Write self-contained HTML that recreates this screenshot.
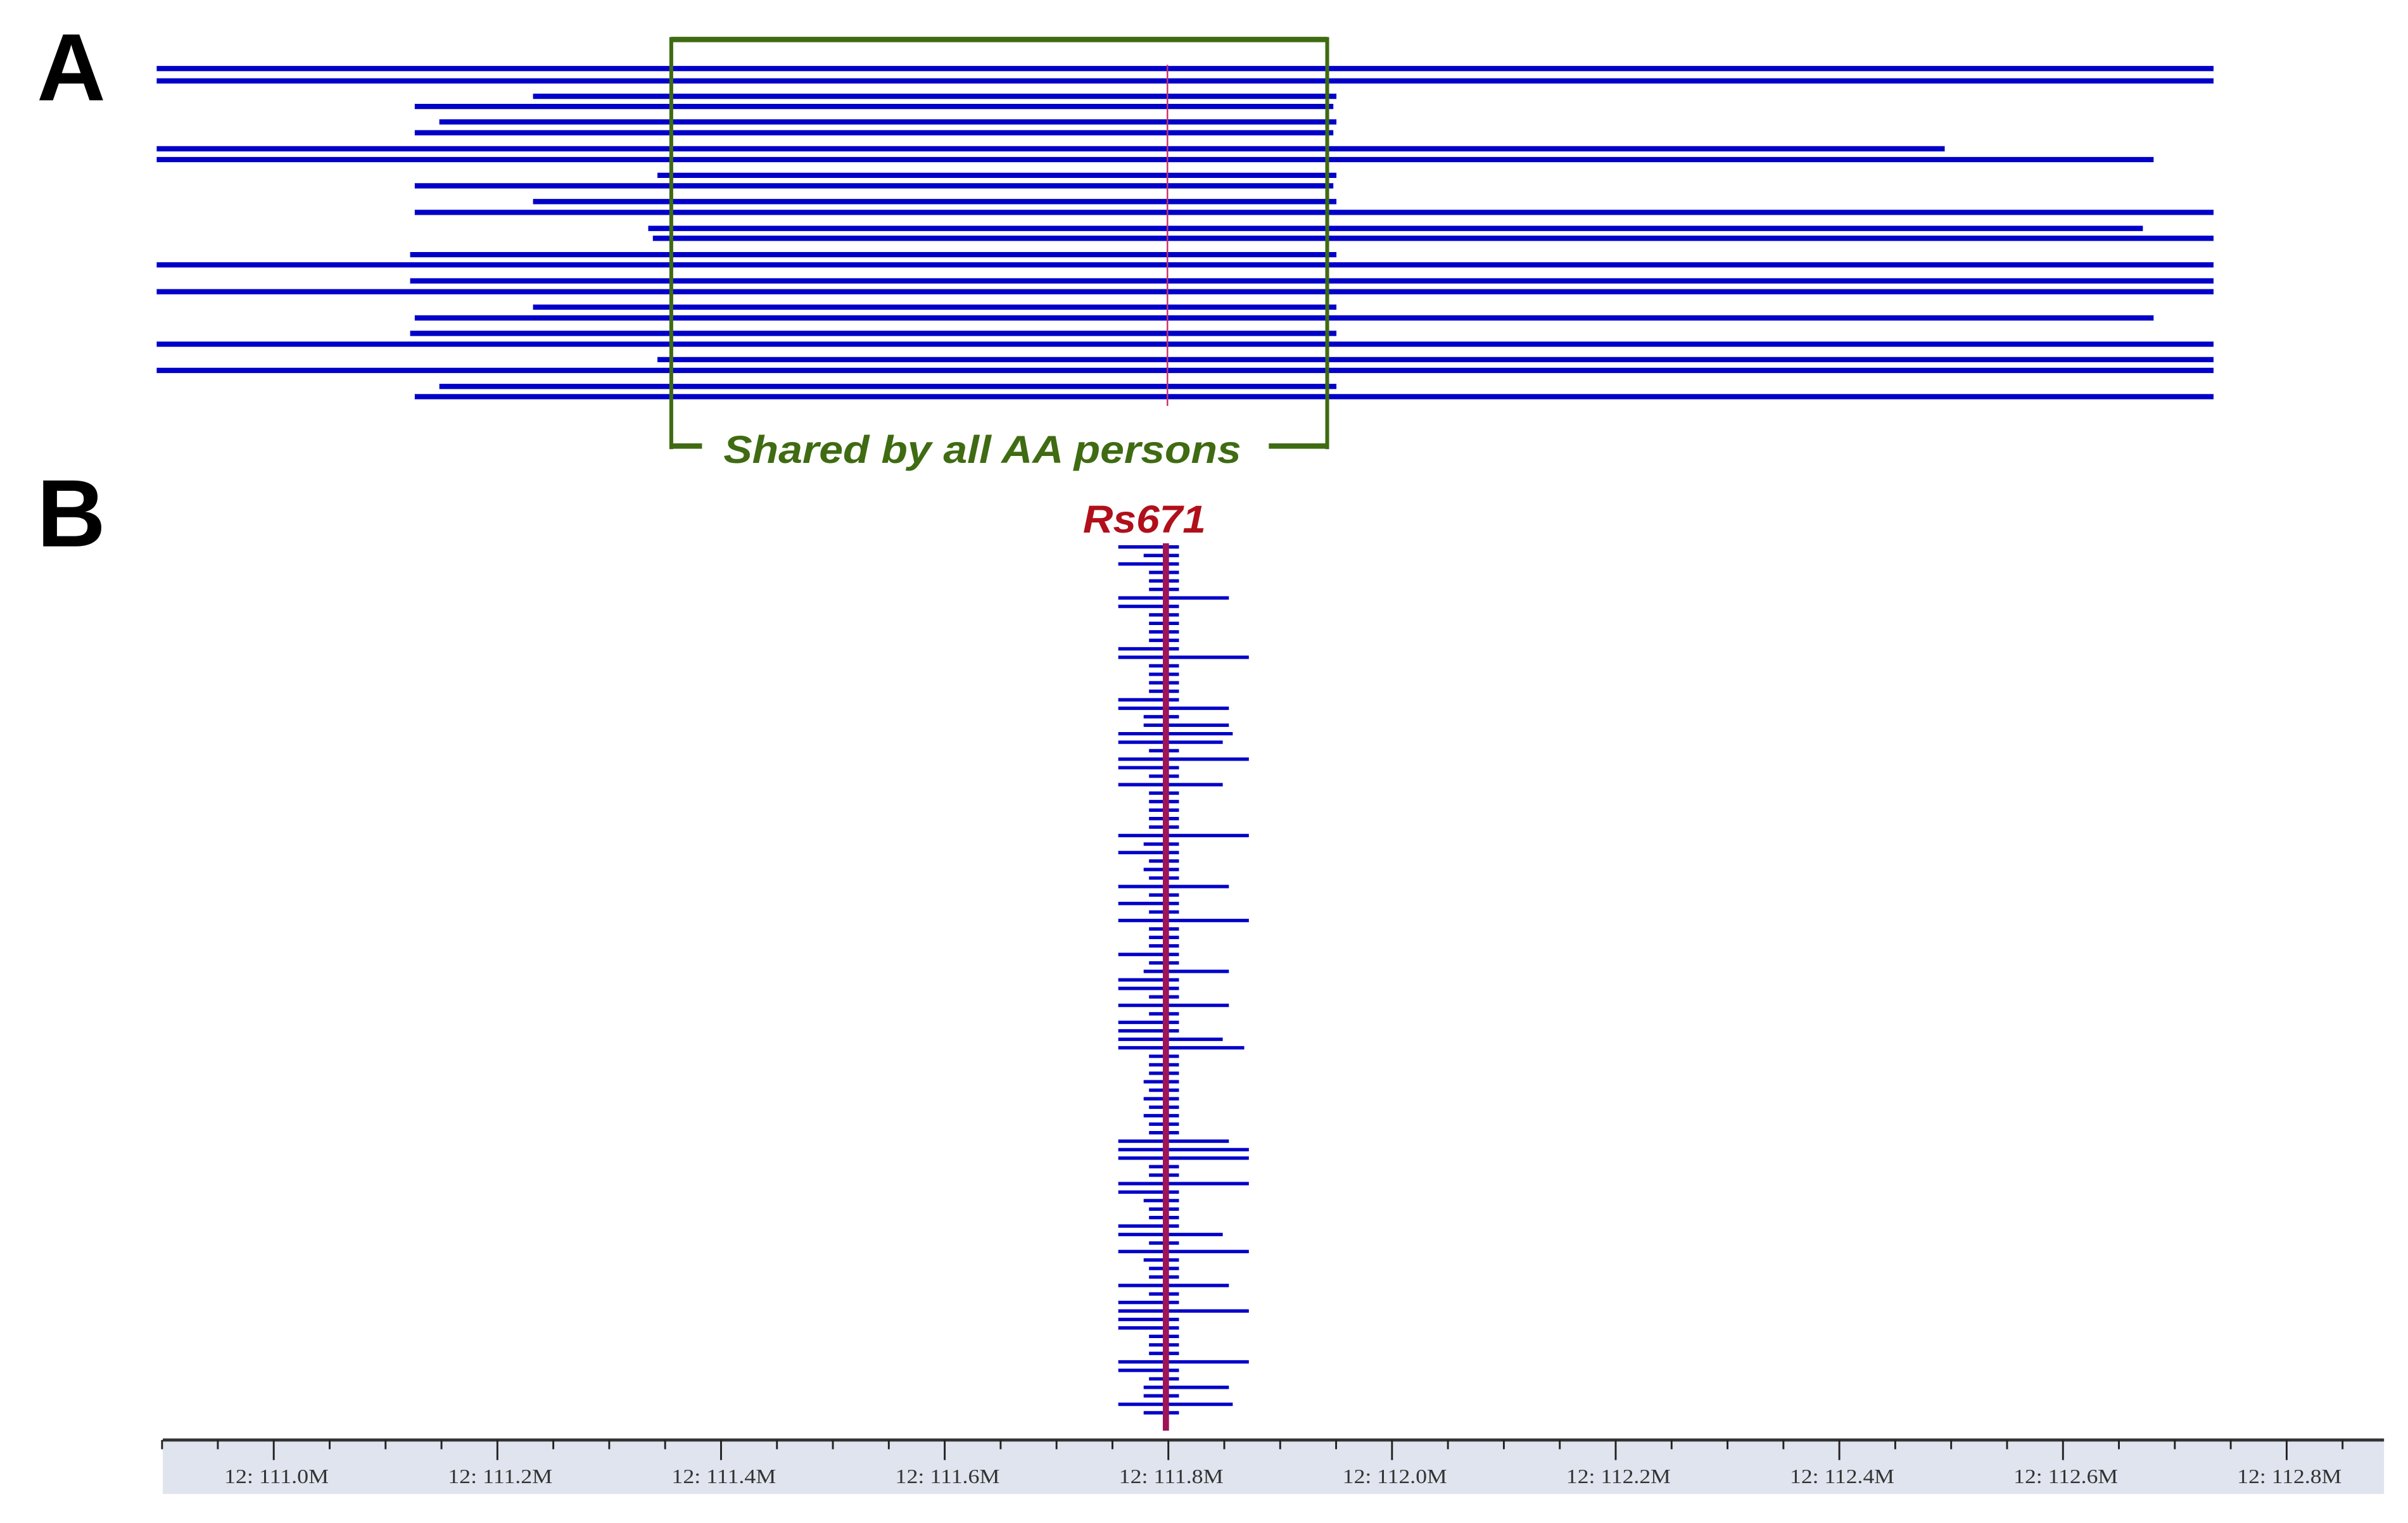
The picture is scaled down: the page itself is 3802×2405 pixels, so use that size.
<!DOCTYPE html>
<html><head><meta charset="utf-8"><style>html,body{margin:0;padding:0;background:#fff}svg{display:block}</style></head><body>
<svg width="3802" height="2405" viewBox="0 0 1567.6 986.8" preserveAspectRatio="none" xmlns="http://www.w3.org/2000/svg">
<rect width="1567.6" height="986.8" fill="#fff"/>
<text x="24" y="65" font-family="Liberation Sans, sans-serif" font-weight="bold" font-size="62" fill="#000">A</text>
<text x="24" y="354" font-family="Liberation Sans, sans-serif" font-weight="bold" font-size="62" fill="#000">B</text>
<g stroke="#0000c8" stroke-width="3.4" fill="none">
<path d="M102 44.4H1441M102 52.4H1441M347 62.4H870M270 69H868M286 79H870M270 86H868M102 96.4H1266M102 103.4H1402M428 113.6H870M270 120.4H868M347 130.6H870M270 137.6H1441M422 148H1395M425 154.4H1441M267 165H870M102 171.6H1441M267 182H1441M102 189H1441M347 199H870M270 206H1402M267 216H870M102 223H1441M428 233H1441M102 240H1441M286 250.4H870M270 257H1441"/>
</g>
<line x1="760" y1="42" x2="760" y2="263" stroke="#c8306a" stroke-width="1"/>
<g stroke="#3f6b12" fill="none">
<path d="M437 25.6H864" stroke-width="3.5"/>
<path d="M437 24V291M864 24V291" stroke-width="2.5"/>
<path d="M436 289H457M826 289H865" stroke-width="3.5"/>
</g>
<text x="471" y="300" textLength="337" lengthAdjust="spacingAndGlyphs" font-family="Liberation Sans, sans-serif" font-weight="bold" font-style="italic" font-size="25" fill="#3f6b12">Shared by all AA persons</text>
<text x="705" y="345" textLength="80" lengthAdjust="spacingAndGlyphs" font-family="Liberation Sans, sans-serif" font-weight="bold" font-style="italic" font-size="25" fill="#b0101a">Rs671</text>
<g stroke="#0000c8" stroke-width="2.2" fill="none">
<path d="M728 354.4H767.5M744.5 359.9H767.5M728 365.4H767.5M748 370.9H767.5M748 376.4H767.5M748 381.9H767.5M728 387.4H800M728 392.9H767.5M748 398.4H767.5M748 403.9H767.5M748 409.4H767.5M748 414.9H767.5M728 420.4H767.5M728 425.9H813M748 431.4H767.5M748 436.9H767.5M748 442.4H767.5M748 447.9H767.5M728 453.4H767.5M728 458.9H800M744.5 464.4H767.5M744.5 469.9H800M728 475.4H802.5M728 480.9H796M748 486.4H767.5M728 491.9H813M728 497.4H767.5M748 502.9H767.5M728 508.4H796M748 513.9H767.5M748 519.4H767.5M748 524.9H767.5M748 530.4H767.5M748 535.9H767.5M728 541.4H813M744.5 546.9H767.5M728 552.4H767.5M748 557.9H767.5M744.5 563.4H767.5M748 568.9H767.5M728 574.4H800M748 579.9H767.5M728 585.4H767.5M748 590.9H767.5M728 596.4H813M748 601.9H767.5M748 607.4H767.5M748 612.9H767.5M728 618.4H767.5M748 623.9H767.5M744.5 629.4H800M728 634.9H767.5M728 640.4H767.5M748 645.9H767.5M728 651.4H800M748 656.9H767.5M728 662.4H767.5M728 667.9H767.5M728 673.4H796M728 678.9H810M748 684.4H767.5M748 689.9H767.5M748 695.4H767.5M744.5 700.9H767.5M748 706.4H767.5M744.5 711.9H767.5M748 717.4H767.5M744.5 722.9H767.5M748 728.4H767.5M748 733.9H767.5M728 739.4H800M728 744.9H813M728 750.4H813M748 755.9H767.5M748 761.4H767.5M728 766.9H813M728 772.4H767.5M744.5 777.9H767.5M748 783.4H767.5M748 788.9H767.5M728 794.4H767.5M728 799.9H796M748 805.4H767.5M728 810.9H813M744.5 816.4H767.5M748 821.9H767.5M748 827.4H767.5M728 832.9H800M748 838.4H767.5M728 843.9H767.5M728 849.4H813M728 854.9H767.5M728 860.4H767.5M748 865.9H767.5M748 871.4H767.5M748 876.9H767.5M728 882.4H813M728 887.9H767.5M748 893.4H767.5M744.5 898.9H800M744.5 904.4H767.5M728 909.9H802.5M744.5 915.4H767.5"/>
</g>
<line x1="759" y1="352" x2="759" y2="927" stroke="#9e1456" stroke-width="4"/>
<rect x="106" y="932" width="1446" height="36" fill="#e0e4ee"/>
<line x1="106" y1="933" x2="1552" y2="933" stroke="#333" stroke-width="2"/>
<g stroke="#222" stroke-width="1.2">
<path d="M105.5 933v6M141.8 933v6M214.6 933v6M251 933v6M287.4 933v6M360.2 933v6M396.6 933v6M433 933v6M505.8 933v6M542.2 933v6M578.6 933v6M651.4 933v6M687.8 933v6M724.2 933v6M797 933v6M833.4 933v6M869.8 933v6M942.6 933v6M979 933v6M1015.4 933v6M1088.2 933v6M1124.6 933v6M1161 933v6M1233.8 933v6M1270.2 933v6M1306.6 933v6M1379.4 933v6M1415.8 933v6M1452.2 933v6M1525 933v6"/>
<path d="M178.2 933v13M323.8 933v13M469.4 933v13M615 933v13M760.6 933v13M906.2 933v13M1051.8 933v13M1197.4 933v13M1343 933v13M1488.6 933v13"/>
</g>
<g font-family="Liberation Serif, serif" font-size="13" fill="#333" text-anchor="middle">
<text x="180" y="961" textLength="68" lengthAdjust="spacingAndGlyphs">12: 111.0M</text>
<text x="325.6" y="961" textLength="68" lengthAdjust="spacingAndGlyphs">12: 111.2M</text>
<text x="471.2" y="961" textLength="68" lengthAdjust="spacingAndGlyphs">12: 111.4M</text>
<text x="616.8" y="961" textLength="68" lengthAdjust="spacingAndGlyphs">12: 111.6M</text>
<text x="762.4" y="961" textLength="68" lengthAdjust="spacingAndGlyphs">12: 111.8M</text>
<text x="908" y="961" textLength="68" lengthAdjust="spacingAndGlyphs">12: 112.0M</text>
<text x="1053.6" y="961" textLength="68" lengthAdjust="spacingAndGlyphs">12: 112.2M</text>
<text x="1199.2" y="961" textLength="68" lengthAdjust="spacingAndGlyphs">12: 112.4M</text>
<text x="1344.8" y="961" textLength="68" lengthAdjust="spacingAndGlyphs">12: 112.6M</text>
<text x="1490.4" y="961" textLength="68" lengthAdjust="spacingAndGlyphs">12: 112.8M</text>
</g>
</svg>
</body></html>
